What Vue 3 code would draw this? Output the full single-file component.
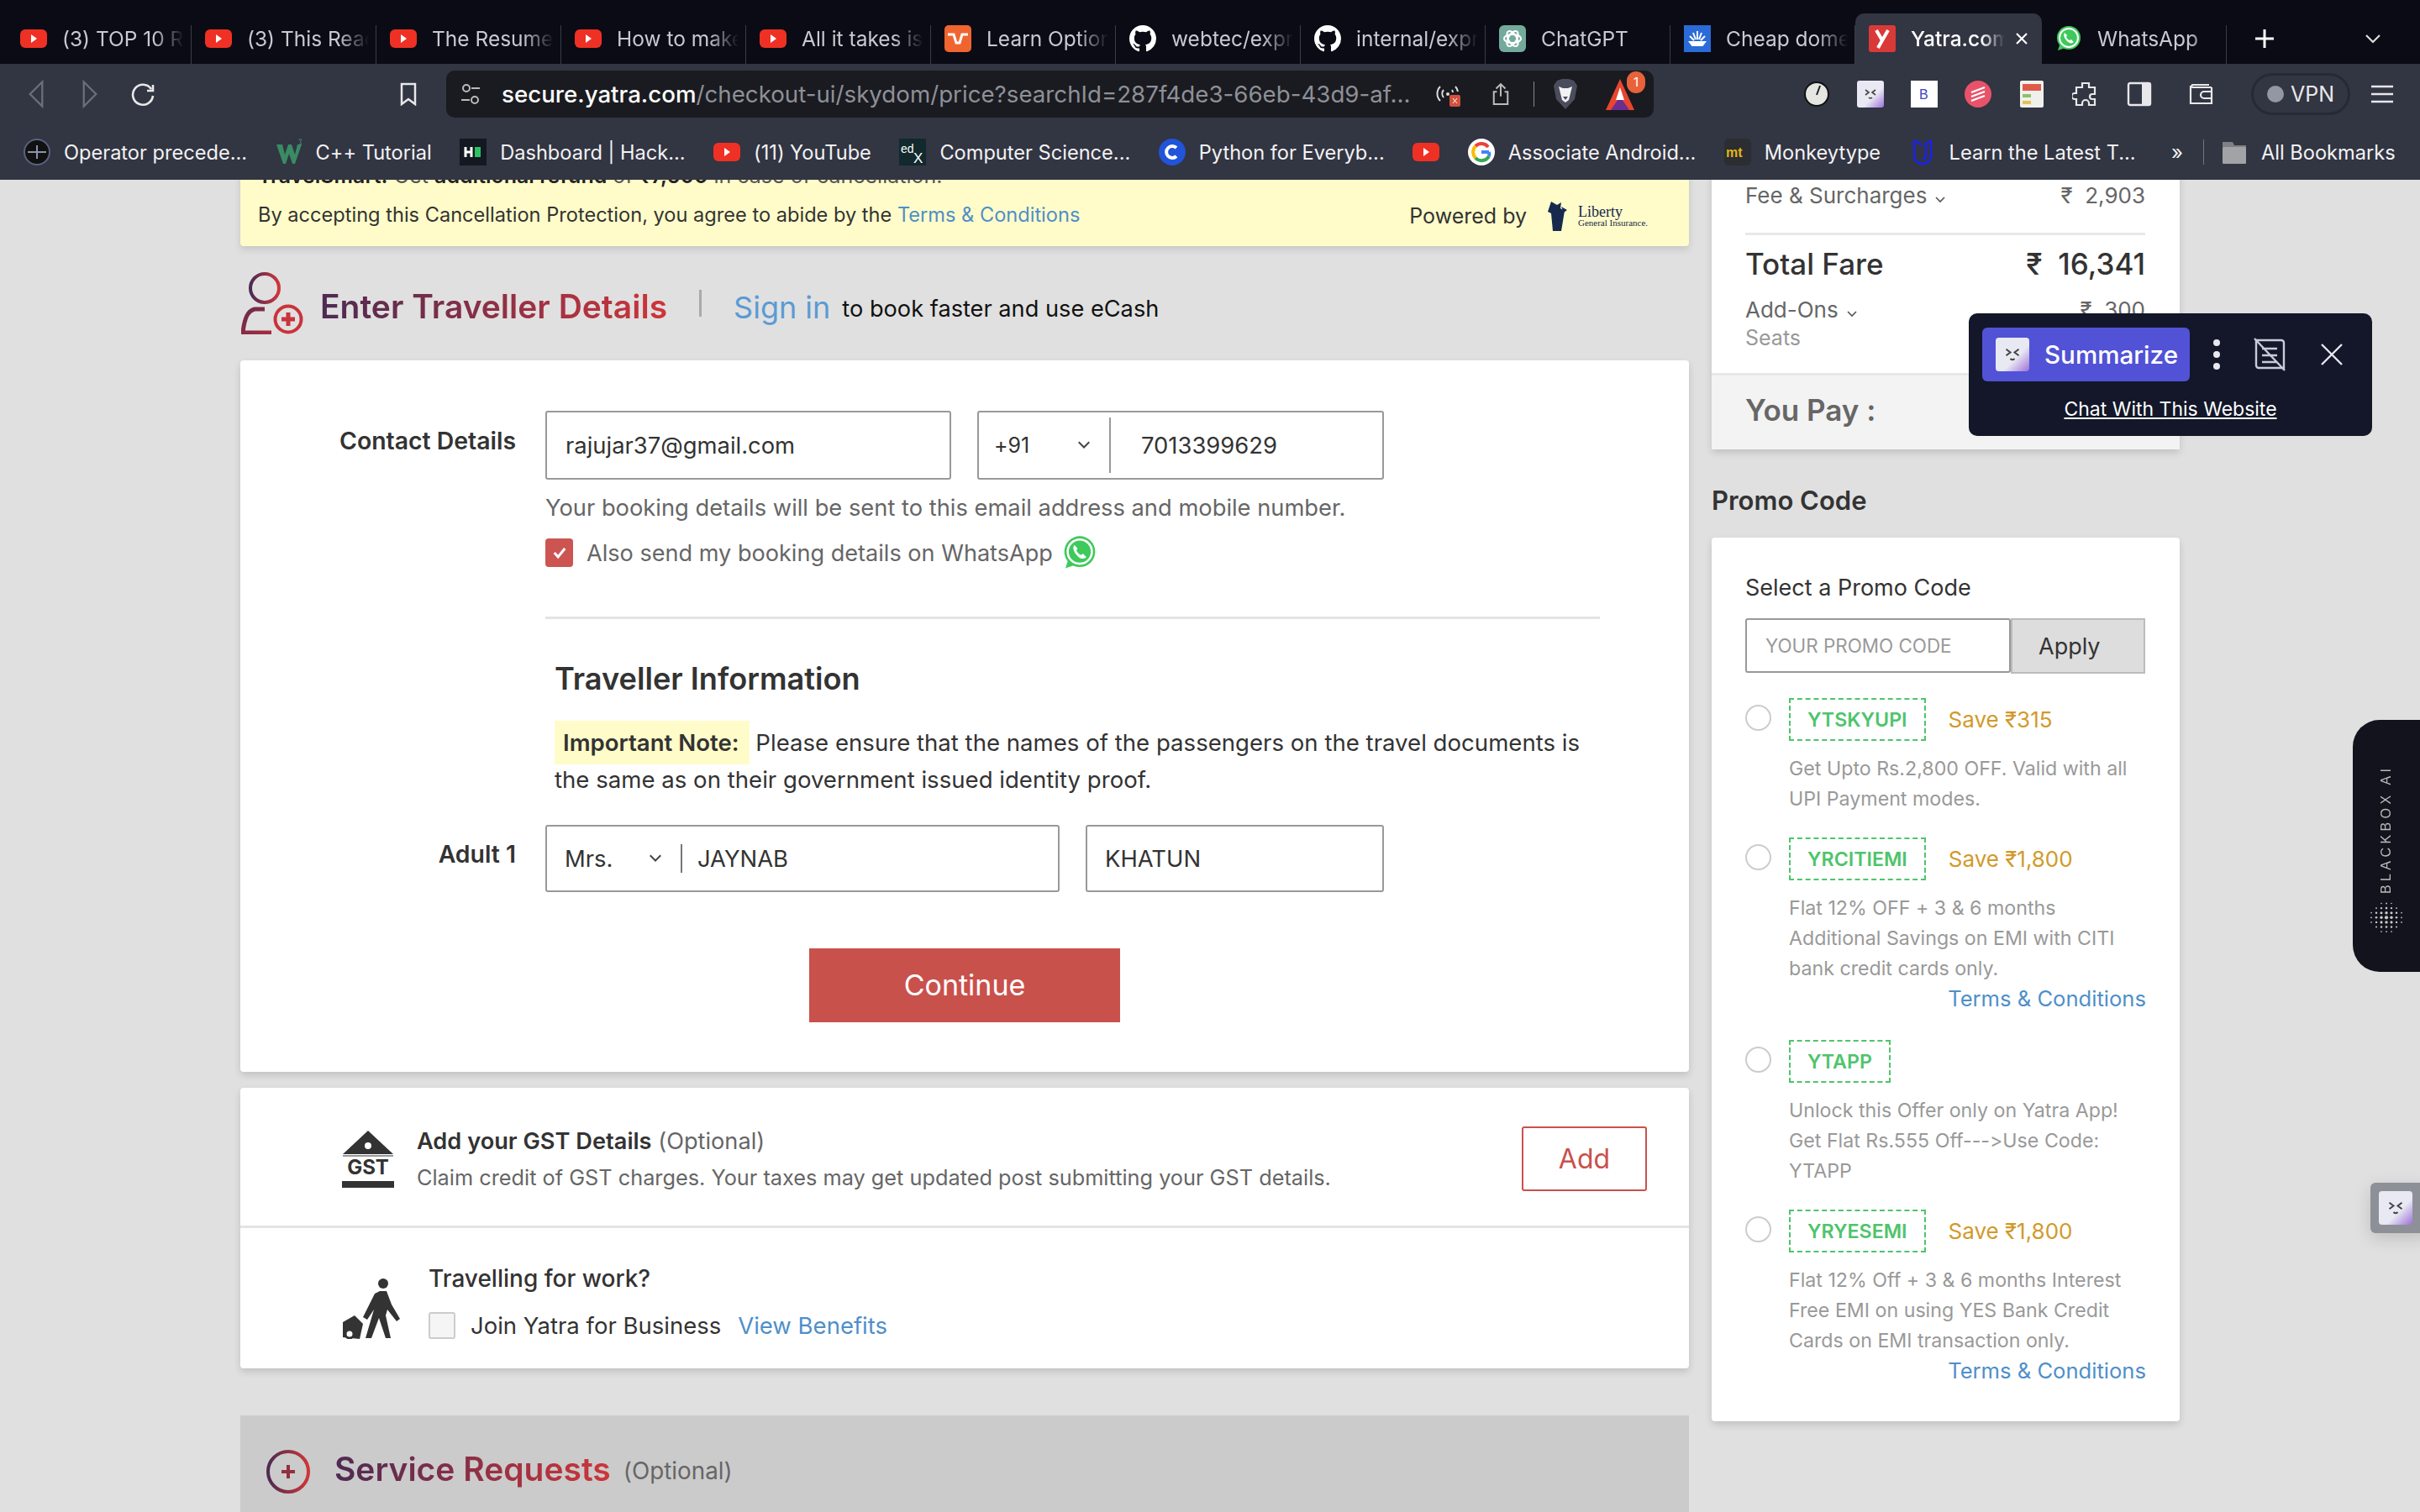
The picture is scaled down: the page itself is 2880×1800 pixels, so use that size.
<script setup>
const gh = '<path transform="scale(2)" fill="#fff" d="M8 0C3.58 0 0 3.58 0 8c0 3.54 2.29 6.53 5.47 7.59.4.07.55-.17.55-.38 0-.19-.01-.82-.01-1.49-2.01.37-2.53-.49-2.69-.94-.09-.23-.48-.94-.82-1.13-.28-.15-.68-.52-.01-.53.63-.01 1.08.58 1.23.82.72 1.21 1.87.87 2.33.66.07-.52.28-.87.51-1.07-1.78-.2-3.64-.89-3.64-3.95 0-.87.31-1.59.82-2.15-.08-.2-.36-1.02.08-2.12 0 0 .67-.21 2.2.82.64-.18 1.32-.27 2-.27.68 0 1.36.09 2 .27 1.53-1.04 2.2-.82 2.2-.82.44 1.1.16 1.92.08 2.12.51.56.82 1.27.82 2.15 0 3.07-1.87 3.75-3.65 3.95.29.25.54.73.54 1.48 0 1.07-.01 1.93-.01 2.2 0 .21.15.46.55.38A8.013 8.013 0 0016 8c0-4.42-3.58-8-8-8z"/>'
const face = '<rect width="32" height="32" rx="3" fill="url(#fg)"/><path d="M10 11l4 3-4 3M22 11l-4 3 4 3" fill="none" stroke="#444" stroke-width="1.6"/><path d="M14 20q2 2 4 0" fill="none" stroke="#444" stroke-width="1.6"/>'
const icons = {
  yt: '<rect y="5" width="32" height="22" rx="6" fill="#ee3124"/><path d="M13 11l7 5-7 5z" fill="#fff"/>',
  od: '<rect width="32" height="32" rx="5" fill="#f0652f"/><path d="M4 11h7l3 10h4l3-10h7" fill="none" stroke="#fff" stroke-width="3"/>',
  gh,
  gpt: '<rect width="32" height="32" rx="6" fill="#74aa9c"/><g fill="none" stroke="#fff" stroke-width="2"><ellipse cx="16" cy="16" rx="10" ry="5"/><ellipse cx="16" cy="16" rx="10" ry="5" transform="rotate(60 16 16)"/><ellipse cx="16" cy="16" rx="10" ry="5" transform="rotate(120 16 16)"/></g>',
  ag: '<rect width="32" height="32" fill="#2a6bd8"/><path d="M7 20h18l-3 4H10zM16 7v10M11 9l3 8M21 9l-3 8M7 13l5 5M25 13l-5 5" stroke="#fff" stroke-width="2" fill="#fff"/>',
  ya: '<rect width="32" height="32" rx="3" fill="#d93a38"/><path d="M9 6l7 12 7-12M16 18l-5 9" fill="none" stroke="#fff" stroke-width="4"/>',
  wa: '<circle cx="16" cy="15" r="14" fill="#3ec95b"/><path d="M3 30l3-9 6 6z" fill="#3ec95b"/><circle cx="16" cy="15" r="11" fill="none" stroke="#fff" stroke-width="2"/><path d="M11 9c-2 3 0 7 3 10s6 3 8 1l-3-3-2 1c-2-1-3-2-4-4l1-2z" fill="#fff"/>',
  cc: '<circle cx="16" cy="16" r="15" fill="#111" stroke="#5b6180" stroke-width="2"/><path d="M5 16h22M16 8v16" stroke="#8c93ad" stroke-width="2"/>',
  w3: '<path d="M1 7h7l3 12 4-12h4l4 12 3-12h5l-8 23h-3l-4-12-4 12h-3z" fill="#3a8a64"/><path d="M27 1h4l-2 3 2 2-3 1" fill="none" stroke="#3a8a64"/>',
  hi: '<rect width="32" height="32" fill="#131821"/><path d="M7 10v12M14 10v12M7 16h7" stroke="#fff" stroke-width="3"/><rect x="18" y="10" width="7" height="12" fill="#2fc262"/>',
  ed: '<rect width="32" height="32" fill="#12292d"/><text x="2" y="17" font-size="14" fill="#fff" font-family="Liberation Sans">ed</text><text x="17" y="29" font-size="17" fill="#fff" font-family="Liberation Sans">X</text>',
  cs: '<circle cx="16" cy="16" r="16" fill="#2154d8"/><path d="M21 11a7 7 0 100 10" fill="none" stroke="#fff" stroke-width="4"/>',
  g: '<circle cx="16" cy="16" r="16" fill="#fff"/><path d="M25 16h-9" stroke="#4285f4" stroke-width="4"/><path d="M24 10a10 10 0 00-15-1" fill="none" stroke="#ea4335" stroke-width="4"/><path d="M9 9a10 10 0 000 14" fill="none" stroke="#fbbc05" stroke-width="4"/><path d="M9 23a10 10 0 0016-2" fill="none" stroke="#34a853" stroke-width="4"/><path d="M25 21a10 10 0 000-5" fill="none" stroke="#4285f4" stroke-width="4"/>',
  mt: '<rect width="32" height="32" rx="6" fill="#2b2d31"/><text x="2" y="22" font-size="16" font-weight="700" fill="#e2b714" font-family="Liberation Sans">mt</text>',
  ud: '<path d="M6 2v18c0 6 4 10 10 10s10-4 10-10V2M6 2l10 6M26 2l-6 4v14c0 3-2 4-4 4" fill="none" stroke="#1a22e8" stroke-width="2.5"/>',
  fd: '<path d="M2 8V4h12l2 4h14v22H2z" fill="#7e8085"/><rect x="2" y="10" width="28" height="20" rx="2" fill="#a2a3a6"/>',
  face
}
const tabs = [
  { i: 'yt', t: '(3) TOP 10 Reasons' }, { i: 'yt', t: '(3) This React Tutorial' },
  { i: 'yt', t: 'The Resume That' }, { i: 'yt', t: 'How to make money' },
  { i: 'yt', t: 'All it takes is one' }, { i: 'od', t: 'Learn Options' },
  { i: 'gh', t: 'webtec/express' }, { i: 'gh', t: 'internal/express' },
  { i: 'gpt', t: 'ChatGPT' }, { i: 'ag', t: 'Cheap domestic' },
  { i: 'ya', t: 'Yatra.com', active: true }, { i: 'wa', t: 'WhatsApp' }
]
const marks = [
  { i: 'cc', t: 'Operator precede...' }, { i: 'w3', t: 'C++ Tutorial' }, { i: 'hi', t: 'Dashboard | Hack...' },
  { i: 'yt', t: '(11) YouTube' }, { i: 'ed', t: 'Computer Science...' }, { i: 'cs', t: 'Python for Everyb...' },
  { i: 'yt', t: '' }, { i: 'g', t: 'Associate Android...' }, { i: 'mt', t: 'Monkeytype' }, { i: 'ud', t: 'Learn the Latest T...' }
]
const promos = [
  { code: 'YTSKYUPI', save: 'Save ₹315', lines: ['Get Upto Rs.2,800 OFF. Valid with all', 'UPI Payment modes.'] },
  { code: 'YRCITIEMI', save: 'Save ₹1,800', lines: ['Flat 12% OFF + 3 & 6 months', 'Additional Savings on EMI with CITI', 'bank credit cards only.'], terms: true },
  { code: 'YTAPP', save: '', lines: ['Unlock this Offer only on Yatra App!', 'Get Flat Rs.555 Off--->Use Code:', 'YTAPP'] },
  { code: 'YRYESEMI', save: 'Save ₹1,800', lines: ['Flat 12% Off + 3 & 6 months Interest', 'Free EMI on using YES Bank Credit', 'Cards on EMI transaction only.'], terms: true }
]
const dots = []
for (let r = 0; r < 7; r++) for (let c = 0; c < 7; c++) {
  const d = Math.hypot(c - 3, r - 3)
  if (d < 3.6) dots.push({ x: c * 6 + 2, y: r * 5.6 + 1.5, r: 2.1 - d * 0.4 })
}
</script>

<template>
  <div class="screen">
    <svg width="0" height="0" class="defs"><defs>
      <linearGradient id="fg" x1="0" y1="0" x2="1" y2="1"><stop offset=".6" stop-color="#e9e9f3"/><stop offset="1" stop-color="#9d6fd8"/></linearGradient>
      <linearGradient id="brand" x1="0" y1="0" x2="1" y2="0"><stop offset="0" stop-color="#4d2a52"/><stop offset="1" stop-color="#cf3539"/></linearGradient>
      <linearGradient id="wgrad" x1="0" y1="0" x2="1" y2="1"><stop offset="0" stop-color="#6b2b4b"/><stop offset="1" stop-color="#a52c40"/></linearGradient>
    </defs></svg>

    <header class="browser">
      <div class="tabstrip">
        <div v-for="t in tabs" :key="t.t" class="tab" :class="{ active: t.active }">
          <svg class="fav" viewBox="0 0 32 32" v-html="icons[t.i]"></svg>
          <span class="tab-text">{{ t.t }}</span>
          <svg v-if="t.active" class="tab-x" viewBox="0 0 16 16"><path d="M2 2l12 12M14 2L2 14" stroke="#fff" stroke-width="2.2"/></svg>
        </div>
        <svg class="plus" viewBox="0 0 24 24"><path d="M12 1v22M1 12h22" stroke="#fff" stroke-width="3"/></svg>
        <svg class="tabs-menu" viewBox="0 0 20 12"><path d="M2 2l8 8 8-8" fill="none" stroke="#ddd" stroke-width="2.2"/></svg>
      </div>

      <div class="toolbar">
        <div class="nav">
          <svg viewBox="0 0 22 36"><path d="M19 2L3 18l16 16z" fill="none" stroke="#6c6e7b" stroke-width="2.5"/></svg>
          <svg viewBox="0 0 22 36"><path d="M3 2l16 16L3 34z" fill="none" stroke="#6c6e7b" stroke-width="2.5"/></svg>
          <svg viewBox="0 0 30 30"><path d="M25 9a12 12 0 10 2 8M27 4v7h-7" fill="none" stroke="#e8e8ea" stroke-width="2.6"/></svg>
        </div>
        <svg class="bm" viewBox="0 0 20 28"><path d="M2 2h16v24l-8-6-8 6z" fill="none" stroke="#e8e8ea" stroke-width="2.5"/></svg>
        <div class="urlbar">
          <svg class="site" viewBox="0 0 24 26"><circle cx="7" cy="6" r="4" fill="none" stroke="#bbb" stroke-width="2"/><path d="M13 6h10M1 20h10" stroke="#bbb" stroke-width="2"/><circle cx="17" cy="20" r="4" fill="none" stroke="#bbb" stroke-width="2"/></svg>
          <span class="url"><b>secure.yatra.com</b>/checkout-ui/skydom/price?searchId=287f4de3-66eb-43d9-af...</span>
          <svg class="u1" viewBox="0 0 32 32"><path d="M7 24a12 12 0 010-17M25 7a12 12 0 013 6M11 20a7 7 0 010-9M21 11a6 6 0 011 3" fill="none" stroke="#ddd" stroke-width="2"/><circle cx="16" cy="16" r="2" fill="#ddd"/><rect x="18" y="17" width="13" height="14" rx="2" fill="#d4503e"/><path d="M22 21l5 6M27 21l-5 6" stroke="#fff"/></svg>
          <svg class="u2" viewBox="0 0 24 30"><path d="M12 18V2M6 8l6-6 6 6M7 12H3v16h18V12h-4" fill="none" stroke="#bbb" stroke-width="2.2"/></svg>
          <span class="u-sep"></span>
          <svg class="u3" viewBox="0 0 30 38"><path d="M5 3l6-2h8l6 2 4 6-3 16-11 12L4 25 1 9z" fill="#4a4d5b"/><path d="M7 10l5 2h6l5-2-2 8-2 8-4 3-4-3-2-8z" fill="#f2f2f4"/><path d="M12 22h6l-3 4z" fill="#4a4d5b"/></svg>
          <span class="u4">
            <svg viewBox="0 0 36 40"><path d="M18 2l17 37H1z" fill="#e8462e"/><path d="M7 39l11-16 11 16z" fill="#6a2d91"/><path d="M13 27l5-15 5 15z" fill="#fff"/></svg>
            <i>1</i>
          </span>
        </div>
        <div class="exts">
          <svg viewBox="0 0 32 32"><circle cx="16" cy="16" r="14" fill="#e5e5e2" stroke="#111" stroke-width="2"/><path d="M16 17l4-11" stroke="#222" stroke-width="2"/></svg>
          <svg viewBox="0 0 32 32" v-html="icons.face"></svg>
          <svg viewBox="0 0 32 32"><rect width="32" height="32" fill="#fff"/><text x="10" y="22" font-size="16" font-family="Liberation Sans" fill="#3b46c4">B</text></svg>
          <svg viewBox="0 0 32 32"><circle cx="16" cy="16" r="16" fill="#e8536a"/><path d="M8 14l16-6M8 19l16-6M8 24l16-6" stroke="#fff" stroke-width="2.4"/></svg>
          <svg viewBox="0 0 32 32"><rect x="2" width="28" height="32" rx="2" fill="#f1f1ec"/><rect x="5" y="4" width="22" height="8" fill="#e05a4b"/><rect x="5" y="16" width="10" height="4" fill="#8cc06a"/><rect x="5" y="24" width="10" height="4" fill="#e3c258"/></svg>
          <svg viewBox="0 0 32 32"><path d="M12 3h8v5h7v8h-3a3 3 0 000 6h3v7h-7v-2a3 3 0 00-8 0v2H5v-7H3a3 3 0 010-7h2V8h7z" fill="none" stroke="#e8e8ea" stroke-width="2.2"/></svg>
          <svg viewBox="0 0 32 32"><rect x="3" y="3" width="26" height="26" rx="2" fill="none" stroke="#e8e8ea" stroke-width="2.4"/><rect x="19" y="3" width="10" height="26" fill="#e8e8ea"/></svg>
          <svg class="wallet" viewBox="0 0 32 32"><path d="M28 8H5a2 2 0 010-3h20M3 6v21h25V8M28 13H19a4 4 0 000 8h9" fill="none" stroke="#e8e8ea" stroke-width="2.2"/></svg>
        </div>
        <div class="vpn"><i></i>VPN</div>
        <svg class="burger" viewBox="0 0 28 22"><path d="M1 2h26M1 11h26M1 20h26" stroke="#e8e8ea" stroke-width="2.4"/></svg>
      </div>

      <div class="marks">
        <div v-for="(b, n) in marks" :key="n" class="mark">
          <svg class="fav" viewBox="0 0 32 32" v-html="icons[b.i]"></svg>
          <span v-if="b.t">{{ b.t }}</span>
        </div>
        <span class="more">»</span>
        <span class="m-sep"></span>
        <div class="mark all">
          <svg class="fav" viewBox="0 0 32 32" v-html="icons.fd"></svg>
          <span>All Bookmarks</span>
        </div>
      </div>
    </header>

    <main class="page">
      <div class="scrolled">
        <section class="left">
          <div class="banner">
            <p class="banner-top"><strong>TravelSmart:</strong> Get <strong>additional refund</strong> of <strong>₹7,500</strong> in case of cancellation.</p>
            <div class="banner-row">
              <p>By accepting this Cancellation Protection, you agree to abide by the <a>Terms &amp; Conditions</a></p>
              <div class="powered">
                <span>Powered by</span>
                <svg class="liberty" viewBox="0 0 135 46">
                  <path d="M6 6l7 4 5-3-1 7 5 3-4 24H8L6 20l-4-2z" fill="#17294d"/>
                  <path d="M18 12l7 4-4 3z" fill="#17294d"/>
                  <text x="38" y="24" font-size="18" font-family="Liberation Serif" fill="#17294d">Liberty</text>
                  <text x="38" y="35" font-size="11" font-family="Liberation Serif" fill="#17294d">General Insurance.</text>
                </svg>
              </div>
            </div>
          </div>

          <div class="section-head">
            <svg class="person" viewBox="0 0 74 74">
              <circle cx="28" cy="19" r="17" fill="none" stroke="url(#brand)" stroke-width="4"/>
              <path d="M28 44H16C8 46 4 54 2 72h34" fill="none" stroke="url(#wgrad)" stroke-width="5"/>
              <circle cx="56" cy="56" r="15.5" fill="#e0e0e0" stroke="#c9333c" stroke-width="4"/>
              <path d="M56 48v16M48 56h16" stroke="#c9333c" stroke-width="5"/>
            </svg>
            <h1 class="brand">Enter Traveller Details</h1>
            <span class="head-sep"></span>
            <a class="signin">Sign in</a>
            <span class="signin-note">to book faster and use eCash</span>
          </div>

          <div class="card details">
            <div class="row">
              <label class="row-label">Contact Details</label>
              <div class="row-body">
                <div class="fields">
                  <div class="input email">rajujar37@gmail.com</div>
                  <div class="input phone">
                    <div class="cc">+91<svg class="chev" viewBox="0 0 12 8"><path d="M1 1l5 5 5-5" fill="none" stroke="#444" stroke-width="1.6"/></svg></div>
                    <div class="num">7013399629</div>
                  </div>
                </div>
                <p class="help">Your booking details will be sent to this email address and mobile number.</p>
                <div class="wa-line">
                  <span class="check"><svg viewBox="0 0 16 16"><path d="M3 8l3.5 4L13 4" fill="none" stroke="#fff" stroke-width="2.4"/></svg></span>
                  <span>Also send my booking details on WhatsApp</span>
                  <svg class="wa-icon" viewBox="0 0 32 32" v-html="icons.wa"></svg>
                </div>
                <hr class="rule" />
                <h2 class="ti">Traveller Information</h2>
                <p class="imp"><mark>Important Note:</mark> Please ensure that the names of the passengers on the travel documents is the same as on their government issued identity proof.</p>
              </div>
            </div>
            <div class="row adult">
              <label class="row-label">Adult 1</label>
              <div class="row-body fields">
                <div class="input first">
                  <div class="title">Mrs.<svg class="chev" viewBox="0 0 12 8"><path d="M1 1l5 5 5-5" fill="none" stroke="#444" stroke-width="1.6"/></svg></div>
                  <div class="fname">JAYNAB</div>
                </div>
                <div class="input last">KHATUN</div>
              </div>
            </div>
            <button class="continue">Continue</button>
          </div>

          <div class="card extras">
            <div class="gst">
              <svg class="gst-icon" viewBox="0 0 64 68">
                <path d="M32 0l30 28H2z" fill="#333"/><circle cx="32" cy="18" r="4" fill="#fff"/>
                <path d="M2 30h60" stroke="#333"/>
                <text x="32" y="52" text-anchor="middle" font-size="24" font-weight="700" font-family="Inter" fill="#333">GST</text>
                <rect x="1" y="60" width="62" height="8" fill="#333"/>
              </svg>
              <div class="gst-text">
                <div class="gst-title"><strong>Add your GST Details</strong> (Optional)</div>
                <div class="gst-desc">Claim credit of GST charges. Your taxes may get updated post submitting your GST details.</div>
              </div>
              <button class="add">Add</button>
            </div>
            <div class="work">
              <svg class="walk" viewBox="0 0 76 72">
                <circle cx="50" cy="6" r="6" fill="#333"/>
                <path d="M46 15h8l6 16 10 17-4 3-11-14-2 7 6 27h-6l-8-24-9 24h-7l10-34-8 12-5-3 14-28z" fill="#333"/>
                <path d="M2 70V52l14-8 10 10-4 18z" fill="#333"/><circle cx="10" cy="66" r="5" fill="#fff" stroke="#333" stroke-width="3"/>
              </svg>
              <div>
                <div class="work-title">Travelling for work?</div>
                <div class="work-line">
                  <span class="blank"></span>
                  <span class="join">Join Yatra for Business</span>
                  <a>View Benefits</a>
                </div>
              </div>
            </div>
          </div>

          <div class="service">
            <svg class="svc-icon" viewBox="0 0 52 52"><circle cx="26" cy="26" r="24" fill="none" stroke="url(#brand)" stroke-width="4"/><path d="M26 18v16M18 26h16" stroke="#93303f" stroke-width="4"/></svg>
            <h2 class="brand svc">Service Requests</h2>
            <span class="svc-opt">(Optional)</span>
          </div>
        </section>

        <aside class="right">
          <div class="fare card">
            <div class="fare-body">
              <div class="fare-row"><span>Fee &amp; Surcharges<svg class="chev sm" viewBox="0 0 12 8"><path d="M1 1l5 5 5-5" fill="none" stroke="#555" stroke-width="1.6"/></svg></span><span>₹&nbsp; 2,903</span></div>
              <div class="fare-rule"></div>
              <div class="fare-total"><span>Total Fare</span><span>₹&nbsp; 16,341</span></div>
              <div class="fare-row addons"><span>Add-Ons<svg class="chev sm" viewBox="0 0 12 8"><path d="M1 1l5 5 5-5" fill="none" stroke="#555" stroke-width="1.6"/></svg></span><span>₹&nbsp; 300</span></div>
              <div class="seats">Seats</div>
            </div>
            <div class="pay">You Pay :</div>
          </div>

          <h3 class="promo-head">Promo Code</h3>
          <div class="card promo">
            <div class="promo-label">Select a Promo Code</div>
            <div class="promo-form">
              <div class="promo-input">YOUR PROMO CODE</div>
              <div class="apply">Apply</div>
            </div>
            <div v-for="p in promos" :key="p.code" class="offer" :class="{ hasterms: p.terms }">
              <span class="radio"></span>
              <div class="offer-body">
                <div class="offer-top">
                  <span class="tag">{{ p.code }}</span>
                  <span v-if="p.save" class="save">{{ p.save }}</span>
                </div>
                <p class="offer-desc"><span v-for="l in p.lines" :key="l">{{ l }}</span></p>
                <a v-if="p.terms" class="terms">Terms &amp; Conditions</a>
              </div>
            </div>
          </div>
        </aside>
      </div>
    </main>

    <div class="popup">
      <div class="popup-top">
        <div class="summ">
          <svg viewBox="0 0 32 32" v-html="icons.face"></svg>
          <span>Summarize</span>
        </div>
        <svg class="kebab" viewBox="0 0 8 36"><circle cx="4" cy="4" r="4" fill="#e8e8ee"/><circle cx="4" cy="18" r="4" fill="#e8e8ee"/><circle cx="4" cy="32" r="4" fill="#e8e8ee"/></svg>
        <svg class="nodoc" viewBox="0 0 40 40"><path d="M3 3h30a3 3 0 013 3v30H6a3 3 0 01-3-3zM10 13h18M10 21h18M10 29h18" fill="none" stroke="#c9cbdb" stroke-width="2.4"/><path d="M1 1l36 38" stroke="#c9cbdb" stroke-width="2.4"/></svg>
        <svg class="close" viewBox="0 0 28 28"><path d="M2 2l24 24M26 2L2 26" stroke="#e8e8ee" stroke-width="2.4"/></svg>
      </div>
      <a class="chatlink">Chat With This Website</a>
    </div>

    <div class="blackbox">
      <span>BLACKBOX AI</span>
      <svg viewBox="0 0 40 36"><circle v-for="(d, n) in dots" :key="n" :cx="d.x" :cy="d.y" :r="d.r" fill="#ccc"/></svg>
    </div>
    <div class="mini"><svg viewBox="0 0 32 32" v-html="icons.face"></svg></div>
  </div>
</template>

<style>
html, body { margin: 0; padding: 0; background: #e0e0e0; }
</style>

<style scoped>
.screen { position: relative; width: 2880px; height: 1800px; overflow: hidden; display: flex; flex-direction: column; font-family: Inter, "Noto Sans", sans-serif; font-feature-settings: "calt" 0, "liga" 0; background: #e0e0e0; color: #333; }
.defs { position: absolute; }
p, h1, h2, h3 { margin: 0; }

.browser { flex: none; height: 214px; background: #323542; font-family: Inter, "Liberation Sans", sans-serif; }
.tabstrip { height: 76px; background: #0a0b14; display: flex; padding-left: 8px; box-sizing: border-box; align-items: flex-end; position: relative; }
.tab { width: 220px; height: 46px; display: flex; align-items: center; gap: 18px; padding: 0 0 14px 16px; box-sizing: border-box; border-right: 1px solid #3a3c47; color: #c9cad0; font-size: 24.5px; flex: none; overflow: hidden; }
.tab.active { height: 60px; width: 222px; background: #323542; border: 0; border-radius: 10px 10px 0 0; color: #fff; padding: 0 0 0 16px; font-weight: 500; position: relative; }
.tab .fav { flex: none; width: 32px; height: 32px; }
.tab-text { white-space: nowrap; overflow: hidden; flex: 1; margin-right: 8px; -webkit-mask-image: linear-gradient(90deg, #000 75%, transparent); mask-image: linear-gradient(90deg, #000 75%, transparent); }
.active .tab-text { margin-right: 44px; }
.tab-x { position: absolute; right: 16px; top: 22px; width: 16px; height: 16px; }
.plus { width: 24px; height: 24px; margin: 0 0 18px 33px; flex: none; }
.tabs-menu { width: 20px; height: 12px; margin: 0 0 24px 107px; flex: none; }

.toolbar { height: 72px; display: flex; align-items: center; position: relative; }
.nav { display: flex; align-items: center; width: 190px; padding-left: 33px; box-sizing: border-box; gap: 44px; }
.nav svg { width: 20px; height: 34px; flex: none; }
.nav svg:last-child { width: 30px; height: 30px; margin-left: -6px; }
.bm { width: 20px; height: 28px; margin-left: 286px; flex: none; }
.urlbar { width: 1437px; height: 56px; margin-left: 35px; background: #1a1b20; border-radius: 10px; display: flex; align-items: center; padding-left: 17px; box-sizing: border-box; flex: none; }
.site { width: 24px; height: 26px; flex: none; }
.url { font-size: 27.7px; color: #8e9097; margin-left: 25px; white-space: nowrap; width: 1083px; flex: none; }
.url b { color: #fff; font-weight: 500; }
.u1 { width: 32px; height: 32px; margin-left: 27px; flex: none; }
.u2 { width: 22px; height: 30px; margin-left: 36px; flex: none; }
.u-sep { width: 1px; height: 30px; background: #888; margin-left: 28px; flex: none; }
.u3 { width: 30px; height: 38px; margin-left: 22px; flex: none; }
.u4 { position: relative; width: 36px; height: 40px; margin-left: 32px; flex: none; }
.u4 svg { width: 36px; height: 40px; }
.u4 i { position: absolute; right: -12px; top: -7px; width: 22px; height: 26px; border-radius: 12px; background: #e8623a; color: #fff; font-style: normal; font-size: 15px; text-align: center; line-height: 26px; }
.exts { display: flex; gap: 32px; margin-left: 178px; align-items: center; flex: none; }
.exts svg { width: 32px; height: 32px; flex: none; }
.exts .wallet { margin-left: 10px; }
.vpn { width: 118px; height: 50px; border: 3px solid #272935; border-radius: 26px; box-sizing: border-box; margin-left: 43px; display: flex; align-items: center; justify-content: center; gap: 8px; font-size: 25px; color: #e8e8ea; flex: none; }
.vpn i { width: 20px; height: 20px; border-radius: 50%; background: #9396a3; }
.burger { width: 28px; height: 22px; margin-left: 24px; flex: none; }

.marks { height: 66px; display: flex; align-items: center; padding-left: 28px; color: #f2f2f4; font-size: 23.6px; white-space: nowrap; position: relative; }
.mark { display: flex; align-items: center; gap: 16px; margin-right: 33.5px; flex: none; }
.mark .fav { width: 32px; height: 32px; flex: none; }
.more { position: absolute; left: 2584px; font-size: 24px; }
.m-sep { position: absolute; left: 2622px; width: 1px; height: 30px; background: #777; }
.all { position: absolute; left: 2643px; margin: 0; }

.page { flex: 1; overflow: hidden; }
.scrolled { display: flex; align-items: flex-start; gap: 27px; padding-left: 286px; margin-top: -40px; }
.left { width: 1724px; flex: none; }
.right { width: 557px; flex: none; }
.card { background: #fff; border-radius: 4px; box-shadow: 0 4px 8px rgba(0, 0, 0, .14); }

.banner { height: 119px; background: #fffcc9; padding: 21px 35px 0 21px; box-sizing: border-box; border-radius: 0 0 4px 4px; box-shadow: 0 4px 8px rgba(0, 0, 0, .12); font-size: 23.6px; line-height: 28px; color: #333; position: relative; }
.banner-top { color: #555; font-size: 25px; }
.banner-top strong { color: #222; font-weight: 600; }
.banner-row { display: flex; justify-content: space-between; margin-top: 9px; align-items: center; }
.banner-row a { color: #4f8fc9; }
.powered { display: flex; align-items: center; font-size: 25px; gap: 23px; margin-top: 2px; height: 46px; }
.liberty { width: 135px; height: 46px; flex: none; }

.section-head { height: 136px; display: flex; align-items: center; }
.person { width: 74px; height: 74px; flex: none; margin-left: 1px; }
.brand { background: linear-gradient(90deg, #4d2a52, #cf3539); -webkit-background-clip: text; background-clip: text; color: transparent; font-weight: 600; }
.section-head h1 { font-size: 39px; margin: 6px 0 0 20px; }
.head-sep { width: 3px; height: 32px; background: #aaa; margin-left: 38px; }
.signin { color: #5a9bd4; font-size: 36px; margin: 10px 0 0 38px; }
.signin-note { color: #111; font-size: 27.2px; margin: 13px 0 0 14px; }

.details { height: 847px; padding-top: 60px; box-sizing: border-box; display: flex; flex-direction: column; }
.row { display: flex; }
.row-label { width: 328px; flex: none; text-align: right; font-size: 28.4px; font-weight: 600; color: #333; line-height: 36px; padding-top: 18px; }
.row-body { margin-left: 35px; }
.fields { display: flex; gap: 31px; }
.input { height: 82px; border: 2px solid #999; border-radius: 3px; box-sizing: border-box; font-size: 27.4px; color: #333; display: flex; align-items: center; background: #fff; }
.email { width: 483px; padding-left: 22px; }
.phone { width: 484px; }
.cc { width: 157px; height: 66px; border-right: 2px solid #999; display: flex; align-items: center; justify-content: space-between; padding: 0 22px 0 18px; box-sizing: border-box; font-size: 25px; }
.chev { width: 16px; height: 10px; flex: none; }
.chev.sm { width: 12px; height: 8px; margin-left: 10px; }
.num { padding-left: 36px; }
.help { font-size: 27.3px; color: #666; line-height: 40px; margin-top: 14px; }
.wa-line { display: flex; align-items: center; font-size: 27.1px; color: #666; height: 40px; margin-top: 13px; }
.check { width: 33px; height: 34px; background: #cc5552; border-radius: 4px; display: flex; align-items: center; justify-content: center; margin-right: 16px; flex: none; }
.check svg { width: 20px; height: 20px; }
.wa-icon { width: 42px; height: 42px; margin-left: 11px; flex: none; }
.rule { width: 1255px; border: 0; border-top: 3px solid #e4e4e4; margin: 56px 0 0; }
.ti { font-size: 36.2px; font-weight: 600; color: #333; line-height: 44px; margin: 49px 0 0 11px; }
.imp { font-size: 27.6px; color: #333; line-height: 44px; margin: 32px 0 0 11px; width: 1245px; }
.imp mark { background: #fffcc9; color: #333; font-weight: 600; padding: 9px 12px 9px 10px; }
.adult { margin-top: 32px; }
.adult .row-label { padding-top: 17px; }
.first { width: 612px; height: 80px; }
.last { width: 355px; height: 80px; padding-left: 21px; }
.title { width: 161px; height: 34px; border-right: 2px solid #777; display: flex; align-items: center; justify-content: space-between; padding: 0 22px 0 21px; box-sizing: border-box; }
.fname { padding-left: 18px; }
.continue { align-self: center; width: 370px; height: 88px; margin-top: 67px; background: #c9514c; color: #fff; border: 0; font: 34px Inter, sans-serif; padding-bottom: 3px; }

.extras { margin-top: 19px; height: 334px; }
.gst { height: 167px; border-bottom: 3px solid #e4e4e4; display: flex; align-items: center; padding: 4px 50px 0 120px; box-sizing: border-box; }
.gst-icon { width: 64px; height: 68px; flex: none; margin-top: 2px; }
.gst-text { margin: 3px 0 0 26px; flex: 1; }
.gst-title { font-size: 27.2px; color: #666; line-height: 36px; }
.gst-title strong { color: #333; font-weight: 600; }
.gst-desc { font-size: 25.3px; color: #666; line-height: 36px; margin-top: 7px; }
.add { width: 149px; height: 77px; border: 2px solid #c9514c; border-radius: 3px; background: #fff; color: #c9514c; font: 32px Inter, sans-serif; }
.work { display: flex; align-items: center; height: 167px; padding: 8px 0 0 120px; box-sizing: border-box; }
.walk { width: 76px; height: 72px; flex: none; margin-top: 16px; }
.work > div { margin-left: 28px; }
.work-title { font-size: 28px; font-weight: 500; color: #333; line-height: 36px; }
.work-line { display: flex; align-items: center; margin-top: 21px; font-size: 27.5px; }
.blank { width: 32px; height: 32px; background: #f5f5f5; border: 2px solid #ccc; border-radius: 3px; box-sizing: border-box; margin-right: 18px; }
.join { color: #333; }
.work-line a { color: #4f8fc9; margin-left: 20px; }

.service { margin-top: 56px; height: 200px; background: #cbcbcb; display: flex; align-items: flex-start; padding: 41px 0 0 31px; box-sizing: border-box; }
.svc-icon { width: 52px; height: 52px; flex: none; }
.svc { font-size: 39px; margin: -3px 0 0 29px; line-height: 52px; }
.svc-opt { font-size: 27.8px; color: #666; margin: -3px 0 0 15px; line-height: 56px; }

.fare-body { padding: 41px 41px 0 40px; height: 270px; box-sizing: border-box; }
.fare-row { display: flex; justify-content: space-between; font-size: 26px; line-height: 36px; color: #666; }
.fare-rule { height: 3px; background: #e8e8e8; margin-top: 26px; }
.fare-total { display: flex; justify-content: space-between; font-size: 35px; line-height: 44px; color: #333; font-weight: 500; margin-top: 12px; }
.addons { margin-top: 15px; }
.seats { font-size: 25px; color: #999; line-height: 30px; margin-top: 0; }
.pay { height: 91px; background: #f3f3f3; border-top: 3px solid #e8e8e8; padding-left: 40px; box-sizing: border-box; font-size: 35px; font-weight: 600; color: #666; line-height: 82px; }
.promo-head { font-size: 31px; font-weight: 600; color: #333; line-height: 40px; margin: 41px 0 24px; }
.promo { height: 1052px; padding: 42px 40px 0; box-sizing: border-box; }
.promo-label { font-size: 27px; line-height: 36px; color: #333; }
.promo-form { display: flex; margin: 18px 0 29px; }
.promo-input { width: 316px; height: 65px; border: 2px solid #999; border-radius: 3px; box-sizing: border-box; font-size: 22.4px; color: #999; display: flex; align-items: center; padding-left: 22px; }
.apply { width: 160px; height: 66px; background: #ddd; border: 2px solid #bbb; box-sizing: border-box; font-size: 27px; color: #333; display: flex; align-items: center; padding-left: 31px; }
.offer { display: flex; margin-bottom: 28px; }
.offer.hasterms { margin-bottom: 31px; }
.radio { width: 31px; height: 31px; border: 2px solid #ccc; border-radius: 50%; box-sizing: border-box; margin-top: 8px; flex: none; }
.offer-body { margin-left: 21px; flex: 1; display: flex; flex-direction: column; }
.offer-top { display: flex; align-items: center; height: 51px; }
.tag { height: 51px; border: 2px dashed #4fc46c; box-sizing: border-box; display: flex; align-items: center; padding: 0 20px; color: #4fc46c; font-size: 23.2px; font-weight: 600; }
.save { font-size: 26px; color: #d19a2a; margin-left: 27px; }
.offer-desc { font-size: 23.2px; line-height: 36px; color: #999; margin-top: 15px; display: flex; flex-direction: column; white-space: nowrap; }
.terms { align-self: flex-end; font-size: 25.6px; line-height: 36px; color: #4f8fc9; }

.popup { position: absolute; left: 2343px; top: 373px; width: 480px; height: 146px; background: #131729; border-radius: 10px; }
.popup-top { display: flex; align-items: center; padding: 17px 0 0 16px; }
.summ { width: 247px; height: 64px; border-radius: 6px; background: #5152d6; display: flex; align-items: center; padding-left: 16px; box-sizing: border-box; color: #fff; font-size: 29.6px; font-weight: 500; gap: 18px; }
.summ svg { width: 40px; height: 40px; flex: none; }
.kebab { width: 8px; height: 36px; margin-left: 28px; flex: none; }
.nodoc { width: 40px; height: 40px; margin-left: 40px; flex: none; }
.close { width: 28px; height: 28px; margin-left: 39px; flex: none; }
.chatlink { display: block; text-align: center; color: #fff; font-size: 23px; text-decoration: underline; margin-top: 17px; line-height: 32px; }

.blackbox { position: absolute; left: 2800px; top: 857px; width: 90px; height: 300px; background: #12131c; border-radius: 32px 0 0 32px; color: #bbb; display: flex; flex-direction: column; align-items: center; padding-right: 10px; box-sizing: border-box; }
.blackbox span { writing-mode: vertical-rl; transform: rotate(180deg); font-size: 16px; letter-spacing: 4.4px; white-space: nowrap; font-family: "Liberation Sans", sans-serif; margin-top: 47px; height: 160px; padding-top: 0; }
.blackbox svg { width: 40px; height: 36px; margin-top: 10px; }
.mini { position: absolute; left: 2821px; top: 1408px; width: 70px; height: 60px; background: #8e9098; border-radius: 6px 0 0 6px; box-shadow: 0 6px 20px rgba(0, 0, 0, .15); padding: 10px 0 0 10px; box-sizing: border-box; }
.mini svg { width: 40px; height: 40px; display: block; }
</style>
